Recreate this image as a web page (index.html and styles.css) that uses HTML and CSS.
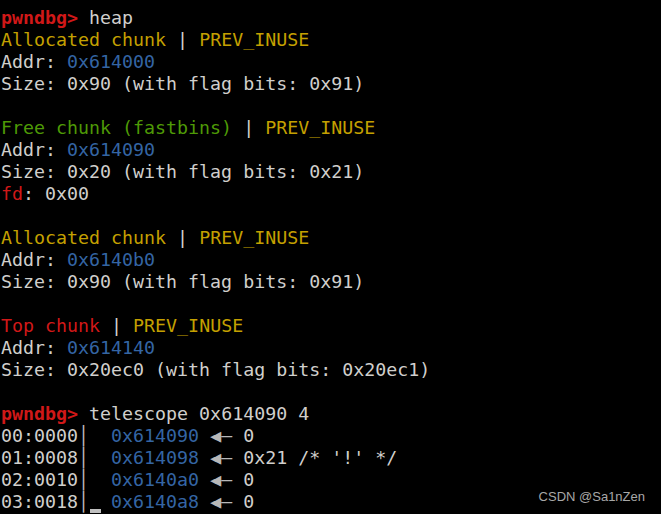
FILE: index.html
```html
<!DOCTYPE html>
<html lang="en">
<head>
  <meta charset="UTF-8">
  <meta name="viewport" content="width=device-width, initial-scale=1.0">
  <title>pwndbg heap</title>
  <link rel="stylesheet" href="styles.css">
</head>
<body>

<div class="terminal">
<pre class="output"><span class="prompt">pwndbg&gt;</span> heap
<span class="yellow">Allocated chunk</span> | <span class="yellow">PREV_INUSE</span>
Addr: <span class="blue">0x614000</span>
Size: 0x90 (with flag bits: 0x91)

<span class="green">Free chunk (fastbins)</span> | <span class="yellow">PREV_INUSE</span>
Addr: <span class="blue">0x614090</span>
Size: 0x20 (with flag bits: 0x21)
<span class="red">fd</span>: 0x00

<span class="yellow">Allocated chunk</span> | <span class="yellow">PREV_INUSE</span>
Addr: <span class="blue">0x6140b0</span>
Size: 0x90 (with flag bits: 0x91)

<span class="red">Top chunk</span> | <span class="yellow">PREV_INUSE</span>
Addr: <span class="blue">0x614140</span>
Size: 0x20ec0 (with flag bits: 0x20ec1)

<span class="prompt">pwndbg&gt;</span> telescope 0x614090 4
00:0000<span class="bar">│</span>  <span class="blue">0x614090</span> <span class="arrow">◀—</span> 0
01:0008<span class="bar">│</span>  <span class="blue">0x614098</span> <span class="arrow">◀—</span> 0x21 /* '!' */
02:0010<span class="bar">│</span>  <span class="blue">0x6140a0</span> <span class="arrow">◀—</span> 0
03:0018<span class="bar">│</span>  <span class="blue">0x6140a8</span> <span class="arrow">◀—</span> 0</pre>
<div class="cursor"></div>
</div>

<div class="watermark">CSDN @Sa1nZen</div>

</body>
</html>
```

FILE: styles.css
```css
:root {
  --fg: #d0cfcc;
  --red: #d01818;
  --yellow: #c4a000;
  --green: #4e9a06;
  --blue: #3465a4;
}

html, body {
  margin: 0;
  height: 100%;
  background-color: #000;
  overflow: hidden;
}

.terminal {
  padding: 7px 0 0 1px;
}

.output {
  margin: 0;
  font-family: 'DejaVu Sans Mono', monospace;
  font-size: 18.3px;
  line-height: 22px;
  color: var(--fg);
}

.prompt {
  color: var(--red);
  font-weight: bold;
}

.red { color: var(--red); }
.yellow { color: var(--yellow); }
.green { color: var(--green); }
.blue { color: var(--blue); }

.bar {
  color: #b8b8b8;
}

.arrow {
  color: #b8b8b8;
}

.cursor {
  width: 11px;
  height: 4px;
  margin: -4px 0 0 89px;
  background-color: #c0c0c0;
}

.watermark {
  position: absolute;
  right: 16px;
  bottom: 10px;
  font-family: 'Liberation Sans', Arial, sans-serif;
  font-size: 13px;
  color: #a8a8a8;
}
```
